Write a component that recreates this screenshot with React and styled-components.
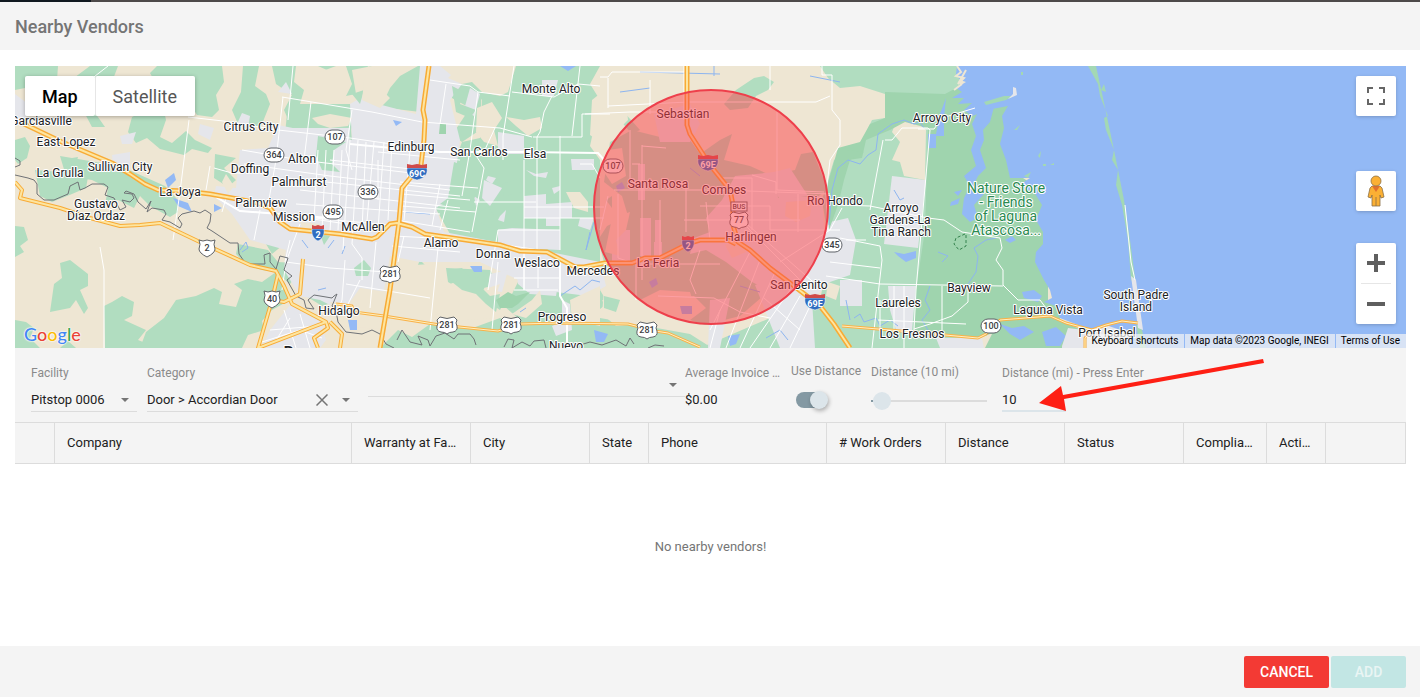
import React, { useState } from "react";
import styled, { createGlobalStyle } from "styled-components";

const GlobalStyle = createGlobalStyle`
  * {
    box-sizing: border-box;
  }
  body {
    margin: 0;
    background: #ffffff;
    color: #212121;
    font-family: Roboto, "Liberation Sans", sans-serif;
    font-size: 13px;
  }
  button, input, select {
    font: inherit;
    color: inherit;
  }
`;

const Page = styled.div`
  display: flex;
  flex-direction: column;
  min-height: 100vh;
`;

const BackdropStrip = styled.div`
  height: 2px;
  background: linear-gradient(to right, #101920 91px, #4d4a4a 91px);
`;

const Header = styled.header`
  display: flex;
  align-items: center;
  height: 48px;
  padding: 0 15px;
  background: #f4f4f4;
`;

const Title = styled.h1`
  margin: 0;
  color: #757575;
  font-size: 18px;
  font-weight: 500;
`;

const Content = styled.main`
  flex: 1;
  display: flex;
  flex-direction: column;
  padding: 16px 14px 0 15px;
`;

const Footer = styled.footer`
  display: flex;
  justify-content: flex-end;
  gap: 2px;
  padding: 10px 14px 9px;
  background: #f4f4f4;
`;

const ActionButton = styled.button`
  height: 32px;
  padding: 0 16px;
  min-width: 75px;
  border: 0;
  border-radius: 2px;
  background: ${({ $bg }) => $bg};
  color: ${({ $color }) => $color};
  font-size: 14px;
  font-weight: 500;
`;

/* ---------- map ---------- */

const MapFrame = styled.section`
  position: relative;
  height: 282px;
  overflow: hidden;
  background: #93b9f5;
`;

const MapSvg = styled.svg`
  display: block;
  width: 100%;
  height: 100%;

  text {
    font-family: Roboto, sans-serif;
    text-anchor: middle;
  }
`;

const MapTypes = styled.div`
  position: absolute;
  top: 10px;
  left: 10px;
  display: flex;
  border-radius: 2px;
  box-shadow: 0 1px 4px rgba(0, 0, 0, 0.3);
`;

const MapTypeButton = styled.button`
  height: 40px;
  padding: 0 ${({ $active }) => ($active ? 17 : 18)}px 0 17px;
  border: 0;
  border-left: ${({ $active }) => ($active ? "0" : "1px solid #e6e6e6")};
  border-radius: 2px;
  background: #ffffff;
  color: ${({ $active }) => ($active ? "#000000" : "#565656")};
  font-size: 18px;
  font-weight: ${({ $active }) => ($active ? 500 : 400)};
`;

const MapControls = styled.div`
  position: absolute;
  top: 10px;
  right: 10px;
  display: flex;
  flex-direction: column;
`;

const ControlGroup = styled.div`
  display: flex;
  flex-direction: column;
  align-items: center;
  width: 40px;
  margin-bottom: ${({ $space }) => $space || 0}px;
  border-radius: 2px;
  background: #ffffff;
  box-shadow: 0 1px 4px -1px rgba(0, 0, 0, 0.3);
`;

const ControlButton = styled.button`
  display: flex;
  align-items: center;
  justify-content: center;
  width: 40px;
  height: 40px;
  padding: 0;
  border: 0;
  background: transparent;
`;

const ControlDivider = styled.div`
  width: 30px;
  height: 1px;
  background: #e6e6e6;
`;

const Attribution = styled.div`
  position: absolute;
  right: 0;
  bottom: 0;
  display: flex;
  gap: 1px;
  color: #000000;
  font-size: 10px;
  line-height: 14px;
`;

const AttributionItem = styled.span`
  padding: 0 6px 0 5px;
  background: rgba(245, 245, 245, 0.7);
  white-space: nowrap;

  a,
  button {
    padding: 0;
    border: 0;
    background: none;
    color: inherit;
    text-decoration: none;
  }
`;

const greens = [
  "M15 66H58L57 80L35 86L15 90Z",
  "M63 86L90 66H118L112 82L98 92L93 110L105 127H92L84 112Z",
  "M157 66H222L224 82L216 95L219 110L212 117L197 115L189 102L176 98L170 88L155 82L150 73Z",
  "M243 66H259L255 86L266 94L270 104L262 124L249 130L238 124L232 110L241 92Z",
  "M132 117L162 102L166 120L160 137L172 143L186 131L195 140L212 148L208 153L192 149L184 155L160 149L147 138L136 143L128 132Z",
  "M272 66H296L294 82L304 90L300 104L316 109L332 104L342 112L355 104L366 103L382 105L390 88L400 76L418 66H300L318 66L345 78L336 98L356 94L352 70L372 66H424L420 112L372 106L350 112L352 140L334 138L312 120L290 124L284 110L292 95L276 84Z",
  "M288 104H352L354 120L348 140H300L285 134Z",
  "M15 140L25 137L30 146L27 158L18 164L15 160Z",
  "M35 170L62 172L72 158L78 157L74 170L88 177L86 188L72 194L52 202L40 196Z",
  "M60 156L120 166L165 186L177 199L178 212L170 217L150 206L140 196L134 208L118 200L105 205L108 188L92 180L66 176Z",
  "M215 154L236 158L224 168L236 180L228 187L214 178Z",
  "M15 226L24 227L28 240L20 246L24 252L15 257Z",
  "M60 263L70 260L88 274L88 286L80 290L88 308L84 314L76 300L70 308L50 312L54 284L62 278Z",
  "M15 320L26 322L34 328L30 338L40 348H15Z",
  "M60 348L68 341L76 348Z",
  "M104 306L112 302L122 296L134 302L132 316L124 320L146 330L138 340L158 348H105Z",
  "M140 348L146 332L164 318L176 300L196 296L214 288L222 292L219 304L236 307L242 290L234 284L248 279L262 282L276 272L284 283L290 300L272 310L262 321L264 330L248 335L242 348Z",
  "M238 244L268 250L278 262L294 263L297 275L290 284L276 272L262 270L246 265L236 254Z",
  "M306 296L332 292L334 302L322 306Z",
  "M271 232L285 236L283 245L272 254L266 244Z",
  "M450 80H482L480 130L462 142L452 135L470 108L452 98Z",
  "M482 66H612L602 92L592 100L590 135L600 142L600 262L560 262L540 253L512 245L450 234L440 216L434 206L446 200L454 164L462 142L480 138L482 100L468 82Z",
  "M446 268L490 270L498 284L484 288L488 302L500 310L505 300L478 290L462 278L458 288L448 282Z",
  "M520 278L580 284L588 294L600 292L604 306L588 318H548L530 340L500 336L520 320L504 306L512 294Z",
  "M380 348L398 330L412 337L430 324L470 329L500 318L524 328L546 320L600 318L640 325L690 334L712 348Z",
  "M420 260L430 270L424 282L414 274Z",
  "M580 262H606L600 290L606 300L592 300L583 294L588 280Z",
  "M610 142L632 130L664 138L690 140L700 154L720 140L732 134L724 160L750 166L770 175L795 170L801 154L813 152L828 190L812 200L790 206L776 210V232L796 238V270L770 290L740 316L705 325L690 320L706 308L694 296L640 300L620 282L604 262L598 240L607 226L628 216L622 196L604 182Z",
  "M820 66H960V360H805L798 310L820 300L830 250L822 200L834 160L860 145L872 120L885 118V94L860 86L840 88L828 78Z",
  "M724 104L736 90L754 78L764 76L774 82L768 90L756 96L748 108L730 110Z",
  "M618 118L622 110L640 130L632 134Z",
  "M806 300L828 310L840 326L860 348H700L770 318Z",
];

const parkGreens = [
  "M885 92L945 94L960 86L972 98L1000 96L1018 96L1020 176L1038 188L1048 196L1048 300L1060 306V330L990 334L980 338L914 330L916 290L925 230L928 128L905 122L890 130L866 140L862 158L834 162L838 148L860 142L870 124L885 118Z",
  "M834 162L846 150L864 152L850 160L844 180L838 205L829 230L826 190Z",
  "M1000 318L1016 324L1040 321L1056 318L1090 334L1088 348H985Z",
  "M496 300L508 292L516 296L530 292L518 304L512 308L500 308Z",
  "M440 124H446V134H439Z",
];

const beiges = [
  "M312 75L336 66H346L352 84L345 98L330 104L318 94L330 84Z",
  "M368 66L386 72L380 88L390 98L380 108L362 100L364 82Z",
  "M312 118L330 114L352 118L348 126L330 128L318 124Z",
  "M222 182L226 174L234 186L228 194Z",
  "M460 66H516L508 92L500 96L482 92L472 82L462 84L448 78Z",
  "M477 108L492 102L502 118L494 130L498 146L484 142L476 132Z",
  "M506 117L524 120L540 117L542 128L528 136L516 126Z",
  "M566 192L580 192L588 202L588 212L574 208Z",
  "M600 66H640L648 74L640 90L620 86L600 100L590 84Z",
  "M596 118L614 92L626 102L628 120L610 138L600 160L590 146Z",
  "M608 150L622 148L626 176L612 184L604 172Z",
  "M612 218L630 212L626 230L616 240L620 256L605 252Z",
  "M640 300L660 290L690 292L694 305L680 318L656 308Z",
  "M725 245L740 238L746 252L732 258Z",
  "M896 122L914 120L926 130L925 180L904 176L900 162L892 160L900 142L892 132Z",
  "M786 202L812 200L810 216L796 222L785 216Z",
  "M604 290L624 300L640 324L616 326L602 314Z",
  "M450 284L466 278L482 290L500 284L492 306L494 318L440 322L452 300Z",
  "M532 300L540 290L542 304L526 318L512 314Z",
  "M300 222L320 224L318 232L304 232Z",
  "M330 302L390 306L392 330L340 326Z",
  "M394 266L432 264L446 290L460 304L450 322L396 318L392 290Z",
  "M360 288L388 292L384 322L340 316Z",
  "M570 300L600 286V326L572 320Z",
  "M828 282L840 286L836 300L826 296Z",
];

const urban = [
  "M278 125L352 140L350 104L364 96L378 104L416 114L420 66H440L462 84L450 100L460 140L452 200L436 208L444 232L540 250L600 262L606 286L588 296L540 290L480 262L420 262L390 256L384 290L370 322L340 310L320 300L300 296L284 270L286 250L250 240L232 214L214 196L216 186L236 188L240 150L268 148Z",
  "M318 148H420V230H318Z",
  "M276 128H350L348 160L320 190L276 188Z",
  "M15 94L28 104L26 118L15 122Z",
  "M112 155L130 152L130 170L114 172Z",
  "M200 124L214 128L210 140L198 134Z",
  "M120 136L136 132L132 144L122 144Z",
  "M286 82L292 94L278 92Z",
  "M242 113L250 116L248 128L236 126Z",
  "M498 132L524 136V154H498Z",
  "M542 80L558 80L554 96H542Z",
  "M470 88L480 94L474 116L464 110Z",
  "M454 90L462 94L456 104Z",
  "M484 180L502 188L490 206L482 198Z",
  "M524 196L546 194V204L572 202V218H560V226H546V218H524Z",
  "M526 170L536 174L548 172L546 178L534 176Z M552 188L560 186V190L554 194Z",
  "M488 176L496 178L492 184L486 180Z M474 196L480 200L476 206Z M500 216L506 210L504 222L498 220Z",
  "M498 230L512 228L560 230V250L520 248L498 242Z",
  "M580 218H594L590 230L578 226Z",
  "M571 159H594V170H572Z",
  "M548 264L562 262L556 296L530 294L518 284L516 268Z",
  "M490 274L508 270L502 292L488 290Z",
  "M562 300L570 304L572 330L556 336L552 326L562 322Z",
  "M612 230H630V262H612Z",
  "M735 176L776 172L778 198L822 196L824 230L800 300L780 296L752 282L726 262L706 250L690 254L694 238L710 232L706 218L722 200Z",
  "M766 174L790 168L808 196L780 200Z",
  "M654 114L690 104L700 124L690 142H660Z",
  "M638 164H645V200H638Z M655 220H661V254H655Z M640 218H651V256H640Z M654 242H662V262H654Z",
  "M755 285L800 270L830 222L848 218L856 240L850 275L830 282L812 300L815 348H780Z",
  "M840 280H862V306H840Z",
  "M892 176L926 180L918 248L884 244Z",
  "M888 286L916 286L912 330H896L890 310Z",
  "M936 338H982L984 348H940Z",
  "M262 348L270 330L290 305L320 320L326 340L320 348Z",
  "M710 300L730 298L720 348H708Z",
];

const waters = [
  "M957 66H1420V360H1095L1100 340L1086 328L1060 318L1056 306L1044 302L1052 298L1050 290L1044 280L1039 270L1035 262L1036 252L1043 244L1043 232L1036 220L1042 205L1034 192L1018 186L1030 178L1010 178L1006 160L1000 144L1004 128L1002 116L1008 106L992 109L972 116L964 110L972 103L958 104L964 98L952 98L962 92L956 88L966 82L960 80L956 74Z",
  "M978 112L994 107L990 122L983 130L984 140L980 150L986 168L978 176L975 182L984 194L974 205L978 218L970 222L962 214L964 198L970 186L964 176L976 166L971 150L976 136L972 124Z",
  "M928 134H936L940 114L946 98L944 118L944 136L936 136V148H928Z",
  "M1042 332L1056 327L1066 336L1060 346H1046Z",
  "M1000 324L1012 328L1024 326L1034 332L1020 340L1010 334Z",
  "M1005 240L1012 236L1016 240L1010 243Z",
  "M1022 292L1034 290L1042 296L1038 302L1024 298Z",
  "M165 180L174 173L176 180L168 188Z",
  "M173 198L188 203L192 212L178 206Z",
  "M214 204L222 208L214 212Z",
  "M348 320H357V330H350Z",
  "M894 252L904 254L916 251L916 258L906 262L898 256Z",
  "M470 266L482 266L482 272L474 272Z",
  "M616 186L622 182L625 188L618 192Z",
  "M649 282L656 278L658 284L652 288Z M680 306H692V314H682Z",
  "M728 336L740 334L736 344L730 346Z",
  "M594 330L608 334L604 342H596Z",
  "M393 120L402 122L396 126Z M560 66H576L568 71Z",
  "M951 202L960 198L958 204L950 206Z M954 192L962 190L958 196Z",
];

const islands = [
  "M1088 66H1096L1103 98L1114 150L1124 200L1130 240L1136 285L1131 280L1128 240L1122 205L1116 185L1118 170L1112 160L1114 150L1106 130L1104 118L1108 116L1100 96L1098 84Z",
  "M984 102L1004 96L1012 96L1006 100L986 105Z",
  "M1038 156L1041 151L1040 158Z M1024 176L1031 172L1028 178Z M1014 130L1020 125L1017 130Z M1021 72H1023V75H1021Z",
  "M1136 324L1142 330L1146 348H1140Z",
  "M1104 84L1106 92L1101 90Z M1043 164H1046V166H1043Z M1050 165L1054 163V165Z",
];

const streets = [
  "M108 66L90 80",
  "M100 247L104 270V348 M293 66L288 120",
  "M188 117L223 121L278 130L350 138L412 147",
  "M282 97L372 112L422 122L500 128L532 137",
  "M283 97L276 160L268 205L250 205 M311 102L304 160 M290 240L285 262 M352 110L346 150L352 170",
  "M189 120L180 192L173 240 M210 166L206 190 M214 168L232 173L244 173",
  "M242 150L300 160L420 174 M244 164L330 176L450 190 M288 178L460 196 M300 190L460 208 M296 204L440 214 M292 216L400 226",
  "M318 150L314 220 M326 150L322 230 M334 150L330 232 M342 150L338 230 M350 140L343 250 M358 140L352 244L362 258V280 M366 142L362 230 M374 142L366 232 M384 142L378 230 M392 142L388 220 M410 150L404 220",
  "M378 152L460 160 M330 160L420 170 M400 182L478 188 M402 194L470 200 M402 206L476 212 M396 220L470 232",
  "M378 160V200 M440 184L432 226 M448 200L440 230 M394 236L470 240L540 250 M392 246L460 252 M404 236L398 262",
  "M300 224L286 262L282 290 M286 262L330 268L386 272 M345 260L342 300L338 310 M376 242L370 308 M360 280L345 310 M346 284L430 298 M438 248L430 330",
  "M216 197L240 211L280 214L360 226 M226 198L222 212 M260 210L254 240",
  "M430 80L470 86L478 92L510 96 M512 92L554 97L578 84L600 86 M446 84L440 124 M478 92L470 150L462 196 M514 66L503 136V160",
  "M552 96L544 112L540 132L537 137V250 M580 66L572 136 M533 137H582V114H610 M475 154L484 168",
  "M560 136V250 M484 168L480 190L472 232 M495 128L482 156",
  "M474 202H536 M524 160V290 M524 207H604 M524 218H604 M498 230H560 M580 164H592L600 178",
  "M514 278H560 M514 290H558 M524 254V290 M538 256V288 M498 230L488 290 M498 262L492 330",
  "M600 77H608L612 72H684 M608 78V108 M608 106L688 102H816L830 96 M684 66V120 M650 80V114 M585 114L630 112L680 112",
  "M822 66V75H832L832 110L840 120V145L830 160L826 194L828 230 M777 112V190L824 192 M770 66V90",
  "M630 130V188 M642 146L666 148 M640 164H632 M642 145V280 M614 190H720L830 194 M608 196L600 230 M686 188V232 M660 200V260 M618 194L618 258L636 264V300",
  "M700 206H770V230H840 M684 220H800 M706 202L710 240 M720 178H752V230 M752 175L776 182V194 M740 218L820 288 M744 224L800 280 M798 194V232 M750 252L710 330 M760 260L726 348 M776 270L740 348 M720 264L640 264 M700 250L690 280L696 294",
  "M658 296L714 298L740 312L770 318 M720 310L710 348 M790 290L750 348 M800 296L770 348 M810 306L790 348 M780 262L830 230L842 208 M764 298L800 330",
  "M840 205L870 206L928 218L944 220L962 232L1000 238L1002 248L996 260L1003 270V285L1018 300H1040L1046 308",
  "M826 276L880 284L1003 286 M883 140L870 210 M885 140H892L902 128L928 128L930 130L916 290L914 330 M918 129L934 129L942 118L975 108",
  "M840 238L880 246L882 260L872 348 M830 262L880 268 M878 320L966 324 M880 300V330 M894 286V330 M904 286V348 M942 286V330 M968 286V302L952 316L930 324L914 329 M846 240H866",
  "M1125 205L1131 262L1135 280",
  "M262 342L300 330L322 338 M284 310L296 348 M300 314L310 348 M270 330L318 326 M275 342L290 318",
];

const creeks = [
  "M829 225L832 190L838 168L848 160L860 164L868 155L876 150L878 134L892 124L904 120L914 124L920 122L924 128",
  "M240 250L246 242L248 248L242 252 M590 232L586 250L594 222 M560 296L575 286L580 290L592 280L600 282 M520 312L526 308",
  "M854 318L860 314L864 322L876 318L880 326L890 320L898 326",
  "M930 286L925 300L930 310L922 320L928 330 M968 284L976 272L978 256L974 248L986 240L996 238",
  "M894 190L900 200L904 198 M900 218L922 224 M938 252L948 256L942 262",
  "M640 72L720 74 M810 76L840 82 M620 92L650 88 M714 66V76 M406 212L430 214",
  "M846 300L850 320 M766 338L780 330L788 340 M740 286L760 292 M690 168L700 176",
  "M328 248L334 240 M302 240L308 248 M345 246L342 254 M318 290L326 288",
];

const river =
  "M15 158L20 161V165L15 167 M15 175L28 178L34 180L37 184V194L44 200L54 200L68 194L70 186L78 182L80 190L85 188L92 184H104L108 187L105 195L114 198L118 206L120 210L126 207L122 200L130 202L134 198L132 194L124 193L126 191L134 194L138 202L146 209L151 201L147 212L152 208L164 210L166 214L162 220L170 222L180 228L182 224L178 218L182 214L194 211L200 213L205 210L211 214L210 222L207 228L212 231L230 243H238L239 254L246 264L265 264L264 255L270 253L270 262L276 269L280 256L288 258L284 270L292 276L287 280L296 296L304 300L306 308L314 309L308 300L314 295L332 298L334 296L337 294L332 306L336 311L338 322L346 332L362 334L372 330L380 334L386 344L394 348 M397 340L402 330L410 342L422 345L418 336L428 340L430 346L436 336L445 333L454 339L458 334L470 334L474 339L476 345 M504 347L508 339L514 340L512 348L522 342L530 346L534 341L544 340L546 348 M580 345L590 342L602 345L616 340L626 346L630 338L634 344 M648 348L655 345L664 346";

const highways = [
  "M20 122L62 142L112 163L130 174L145 184L158 190L185 191L210 194L232 198L258 203L270 208L280 222L290 229L340 234L372 239L377 237L390 224L397 223L412 227L425 234L500 245L520 251L547 252L575 267L584 267L605 263H632L645 258H660L690 243L700 240H728L736 244",
  "M429 66L423 110L425 120L424 140L421 165L402 188L399 222L390 290L380 348",
  "M687 66V125L690 134L710 165L730 190L733 205V225L738 242L750 250L770 268L794 286L820 306L834 324L850 348",
  "M15 182L22 190L20 198L60 208L90 218L120 226L140 225L160 223L204 244L250 265L276 271L284 286L292 304L326 322L328 328L314 338L318 348",
  "M278 274L272 300L258 348L326 322 M303 259L300 294L284 302L272 300 M330 322L342 334L340 348",
];

const minorHighways = [
  "M336 304L352 306L354 312L384 316L440 325L498 331L520 324L560 323L628 324L655 331L668 333L700 347",
  "M842 326L890 330L978 338L986 334L1000 320L1050 316L1066 323L1092 330L1106 325L1122 321L1138 323",
  "M1085 348V338L1092 330",
];

const places = [
  ["Garciasville", 41, 121],
  ["East Lopez", 66, 142],
  ["La Grulla", 60, 173],
  ["Sullivan City", 120, 167],
  ["La Joya", 180, 192],
  ["Gustavo", 96, 204],
  ["Díaz Ordaz", 96, 216],
  ["Citrus City", 251, 127],
  ["Alton", 302, 159],
  ["Doffing", 250, 169],
  ["Palmhurst", 299, 182],
  ["Palmview", 261, 203],
  ["Mission", 294, 217],
  ["McAllen", 363, 227],
  ["Edinburg", 411, 147],
  ["San Carlos", 479, 152],
  ["Elsa", 535, 154],
  ["Monte Alto", 551, 89],
  ["Alamo", 441, 243],
  ["Donna", 493, 254],
  ["Weslaco", 537, 263],
  ["Mercedes", 593, 271],
  ["Progreso", 562, 317],
  ["Hidalgo", 339, 311],
  ["Nuevo", 566, 346],
  ["Sebastian", 683, 114],
  ["Santa Rosa", 658, 184],
  ["Combes", 724, 190],
  ["Rio Hondo", 835, 201],
  ["Harlingen", 751, 237],
  ["La Feria", 658, 263],
  ["San Benito", 799, 285],
  ["Arroyo City", 942, 118],
  ["Arroyo", 901, 208],
  ["Gardens-La", 900, 220],
  ["Tina Ranch", 901, 232],
  ["Bayview", 969, 288],
  ["Laureles", 898, 303],
  ["Los Fresnos", 912, 334],
  ["Laguna Vista", 1048, 310],
  ["Port Isabel", 1107, 333],
  ["South Padre", 1136, 295],
  ["Island", 1136, 307],
];

const parkLabel = [
  ["Nature Store", 1006, 188],
  ["- Friends", 1006, 202],
  ["of Laguna", 1006, 216],
  ["Atascosa...", 1006, 230],
];

const shields = [
  ["state", "107", 335, 137],
  ["state", "364", 274, 155],
  ["state", "336", 368, 192],
  ["state", "495", 333, 212],
  ["state", "107", 613, 166],
  ["state", "345", 832, 245],
  ["state", "100", 991, 326],
  ["us", "281", 390, 274],
  ["us", "281", 447, 325],
  ["us", "281", 511, 325],
  ["us", "281", 647, 330],
  ["us", "77", 739, 220],
  ["mx", "2", 207, 248],
  ["mx", "40", 272, 299],
  ["interstate", "69C", 417, 172],
  ["interstate", "2", 318, 233],
  ["interstate", "69E", 708, 163],
  ["interstate", "2", 688, 244],
  ["interstate", "69E", 815, 302],
];

const usShield = (w) =>
  `M${3 - w} -8Q0 -5 ${w - 3} -8L${w} -5Q${w - 2} -2 ${w} 1Q${w + 1} 6 ${w - 4} 7Q2 7 0 9Q-2 7 ${4 - w} 7Q${-w - 1} 6 ${-w} 1Q${2 - w} -2 ${-w} -5Z`;

const mxShield = "M-8 -8Q-4 -6 0 -8Q4 -6 8 -8Q6 -4 8 1Q8 5 0 9Q-8 5 -8 1Q-6 -4 -8 -8Z";

const RoadShield = ({ kind, label, x, y }) => {
  const wide = label.length > 2;
  if (kind === "interstate") {
    const w = wide ? 10 : 6;
    return (
      <g transform={`translate(${x} ${y})`}>
        <path
          d={`M${-w} -4H${w}C${w + 1} 2 ${w - 2} 6 0 8C${2 - w} 6 ${-w - 1} 2 ${-w} -4Z`}
          fill="#2f6cc0"
          stroke="#ffffff"
          strokeWidth="0.5"
        />
        <path d={`M${-w} -4V-8L${-w / 2} -7L0 -8L${w / 2} -7L${w} -8V-4Z`} fill="#cf4a4a" />
        <text y="5" fontSize="9" fontWeight="700" fill="#ffffff">
          {label}
        </text>
      </g>
    );
  }
  return (
    <g transform={`translate(${x} ${y})`}>
      {kind === "state" ? (
        <rect x="-10" y="-7" width="20" height="14" rx="7" fill="#ffffff" stroke="#5f6368" />
      ) : (
        <path d={kind === "us" ? usShield(wide ? 10 : 9) : mxShield} fill="#ffffff" stroke="#5f6368" />
      )}
      <text y="3" fontSize="9" fontWeight="500" fill="#3c4043">
        {label}
      </text>
    </g>
  );
};

const VendorMap = () => (
  <MapSvg viewBox="15 66 1391 282" preserveAspectRatio="xMidYMid slice" role="img" aria-label="Map">
    <rect x="-400" y="-200" width="2400" height="900" fill="#eee6d3" />
    {greens.map((d, i) => (
      <path key={i} d={d} fill="#b1ddc0" />
    ))}
    {urban.map((d, i) => (
      <path key={i} d={d} fill="#e5e6eb" />
    ))}
    <g fill="#b1ddc0">
      <path d="M454 162L476 170L468 180L476 196L466 206L476 212L466 224L448 206L440 204L448 198Z" />
      <path d="M478 214L488 206L494 216L490 228L480 222Z M502 184L520 178L524 192L504 196Z M352 94L364 90L360 104Z" />
      <path d="M318 136L346 142L334 150L332 164L340 172L322 170L316 156Z M438 206L450 204L462 214L444 214Z M606 200L612 196V208Z" />
      <path d="M354 268L364 260L371 268L368 276H356Z M320 234L330 236L324 245Z M452 86L464 92L460 104L476 110L470 118L456 112Z" />
    </g>
    {beiges.map((d, i) => (
      <path key={i} d={d} fill="#eee6d3" />
    ))}
    <path
      d="M448 270L462 268L470 278L486 276L482 288L490 296L500 294L496 312L486 304L476 294L462 290L452 282Z M604 296L620 300L616 312L604 308Z"
      fill="#b1ddc0"
    />
    {parkGreens.map((d, i) => (
      <path key={i} d={d} fill="#9fd4ae" />
    ))}
    {waters.map((d, i) => (
      <path key={i} d={d} fill="#93b9f5" />
    ))}
    {islands.map((d, i) => (
      <path key={i} d={d} fill="#a3d8b4" />
    ))}
    <path d="M1131 276L1136 280L1143 330L1138 328Z M1013 87L1016 88L1017 95L1008 99L1013 94Z" fill="#e5e6eb" />
    <path d="M1062 346L1068 328L1092 331L1106 325L1126 332L1130 348H1062Z" fill="#e5e6eb" />
    <path
      d="M957 66L961 72L956 76L964 78L958 84L966 70 M954 90L962 84"
      fill="none"
      stroke="#eee6d3"
      strokeWidth="2"
    />
    <g fill="none" stroke="#8db5f0" strokeWidth="1">
      {creeks.map((d, i) => (
        <path key={i} d={d} />
      ))}
    </g>
    <g fill="none" stroke="#ffffff" strokeWidth="1" strokeLinejoin="round">
      {streets.map((d, i) => (
        <path key={i} d={d} />
      ))}
    </g>
    <path
      d="M350 144L412 150L440 152H525L598 153L606 162 M216 197L240 211L330 218 M560 262V296L567 308V348"
      fill="none"
      stroke="#ffffff"
      strokeWidth="2"
    />
    <path d={river} fill="none" stroke="#6f7276" strokeWidth="1" strokeLinejoin="round" />
    <g fill="none" strokeLinejoin="round">
      {minorHighways.map((d, i) => (
        <path key={i} d={d} stroke="#f9b248" strokeWidth="3" />
      ))}
      {minorHighways.map((d, i) => (
        <path key={i} d={d} stroke="#fff0c0" strokeWidth="1" />
      ))}
      {highways.map((d, i) => (
        <path key={i} d={d} stroke="#f8ab35" strokeWidth={i < 3 ? 5 : 4} />
      ))}
      {highways.map((d, i) => (
        <path key={i} d={d} stroke="#fde5a0" strokeWidth="2" />
      ))}
    </g>
    <path
      d="M965 234L956 238L954 244L959 250L966 246V234"
      fill="none"
      stroke="#35834e"
      strokeWidth="1"
      strokeDasharray="3 2"
    />
    {shields.map(([kind, label, x, y]) => (
      <RoadShield key={`${label}-${x}`} kind={kind} label={label} x={x} y={y} />
    ))}
    <rect x="731" y="202" width="16" height="9" fill="#ffffff" stroke="#5f6368" />
    <text x="739" y="209" fontSize="7" fontWeight="500" fill="#3c4043">
      BUS
    </text>
    <g fontSize="12" fill="#202124" stroke="#ffffff" strokeWidth="2" strokeLinejoin="round" paintOrder="stroke">
      {places.map(([name, x, y]) => (
        <text key={name} x={x} y={y + 4}>
          {name}
        </text>
      ))}
      <text x="314" y="358" fontSize="16" fontWeight="500">
        Reynosa
      </text>
    </g>
    <g fontSize="14" fill="#2a8a50" stroke="#ffffff" strokeWidth="2" strokeLinejoin="round" paintOrder="stroke">
      {parkLabel.map(([line, x, y]) => (
        <text key={line} x={x} y={y + 5}>
          {line}
        </text>
      ))}
    </g>
    <circle cx="711" cy="207" r="117" fill="#fb3f48" fillOpacity="0.5" stroke="#ee3f4b" strokeWidth="2" />
  </MapSvg>
);

const Logo = styled.a`
  position: absolute;
  left: 9px;
  bottom: 2px;
  font-family: Lato, sans-serif;
  font-size: 18px;
  font-weight: 500;
  line-height: 24px;
  text-decoration: none;
  text-shadow: 0 0 2px #ffffff, 0 0 2px #ffffff, 0 0 1px #ffffff;
`;

const LogoLetter = styled.span`
  color: ${({ $color }) => $color};
`;

const logoLetters = [
  ["G", "#4285f4"],
  ["o", "#ea4335"],
  ["o", "#fbbc05"],
  ["g", "#4285f4"],
  ["l", "#34a853"],
  ["e", "#ea4335"],
];

const FullscreenIcon = () => (
  <svg width="18" height="18" viewBox="0 0 18 18" fill="#666666">
    <path d="M0 0V6H2V2H6V0Z M12 0V2H16V6H18V0Z M16 12V16H12V18H18V12Z M2 12H0V18H6V16H2Z" />
  </svg>
);

const PegmanIcon = () => (
  <svg width="18" height="32" viewBox="0 0 18 32" stroke="#8a7046" strokeWidth="0.8" strokeLinejoin="round">
    <path d="M5 11L3 13L1 22L4 23L5 20V31H13V20L14 23L17 22L15 13L13 11Z" fill="#fbb034" />
    <path d="M5 11H13L9 17Z" fill="#e0702e" stroke="none" />
    <circle cx="9" cy="6" r="5" fill="#fbb034" />
    <path d="M9 22V31" />
  </svg>
);

const PlusIcon = () => (
  <svg width="18" height="18" viewBox="0 0 18 18" fill="#5f5f5f">
    <path d="M7 0H11V7H18V11H11V18H7V11H0V7H7Z" />
  </svg>
);

const MinusIcon = () => (
  <svg width="18" height="18" viewBox="0 0 18 18" fill="#5f5f5f">
    <path d="M0 7H18V11H0Z" />
  </svg>
);

/* ---------- filters ---------- */

const Filters = styled.form`
  display: grid;
  grid-template-columns: 116px 221px minmax(60px, 317fr) 106px 80px 131px minmax(160px, 404fr);
  padding-left: 16px;
  background: #f4f4f4;
`;

const Field = styled.div`
  position: relative;
  display: flex;
  flex-direction: column;
  padding: ${({ $top }) => $top || 17}px ${({ $gap }) => $gap || 0}px 10px 0;
`;

const Label = styled.label`
  overflow: hidden;
  color: #8a8a8a;
  font-size: 12px;
  line-height: 16px;
  text-overflow: ellipsis;
  white-space: nowrap;
`;

const SelectBox = styled.div`
  position: relative;
  height: 25px;
  margin-top: 6px;
  border-bottom: 1px solid #dcdcdc;
`;

const Select = styled.select`
  width: 100%;
  height: 24px;
  padding: 0;
  border: 0;
  background: transparent;
  appearance: none;
  outline: none;
`;

const Caret = styled.span`
  position: absolute;
  top: 11px;
  right: 8px;
  border: 4px solid transparent;
  border-top-color: #757575;
  border-bottom: 0;
  pointer-events: none;
`;

const ClearButton = styled.button`
  position: absolute;
  top: 7px;
  right: 30px;
  display: flex;
  padding: 0;
  border: 0;
  background: none;
`;

const Amount = styled.output`
  height: 25px;
  margin-top: 6px;
  line-height: 26px;
`;

const Toggle = styled.input`
  position: relative;
  width: 30px;
  height: 16px;
  margin: 13px 0 0 5px;
  border-radius: 8px;
  background: #8499a3;
  appearance: none;

  &::after {
    content: "";
    position: absolute;
    top: -1px;
    right: -2px;
    width: 18px;
    height: 18px;
    border-radius: 50%;
    background: #dce5ea;
    box-shadow: 1px 2px 4px rgba(0, 0, 0, 0.3);
  }
`;

const Slider = styled.input`
  width: 116px;
  height: 18px;
  margin: 12px 0 0;
  background: linear-gradient(to right, #8499a3 2px, #dcdcdc 2px) center / 100% 2px no-repeat;
  appearance: none;

  &::-webkit-slider-thumb {
    width: 18px;
    height: 18px;
    border-radius: 50%;
    background: #dce5ea;
    appearance: none;
  }
`;

const DistanceInput = styled.input`
  width: 64px;
  height: 25px;
  margin-top: 6px;
  padding: 2px 0 0;
  border: 0;
  border-bottom: 2px solid #dce5ea;
  background: transparent;
  outline: none;
`;

const Pointer = styled.svg`
  position: absolute;
  top: 10px;
  left: 37px;
  pointer-events: none;
`;

/* ---------- table ---------- */

const Table = styled.table`
  width: 100%;
  table-layout: fixed;
  border-collapse: separate;
  border-spacing: 0;
`;

const HeadCell = styled.th`
  width: ${({ $width }) => ($width ? `${$width}px` : "auto")};
  height: 42px;
  padding: 0 12px 2px;
  overflow: hidden;
  border: solid #dcdcdc;
  border-width: 1px 1px 1px 0;
  background: #f4f4f4;
  font-weight: 400;
  text-align: left;
  text-overflow: ellipsis;
  white-space: nowrap;
`;

const EmptyCell = styled.td`
  height: 166px;
  padding: 0 0 2px;
  color: #757575;
  text-align: center;
`;

const columns = [
  { id: "select", title: "", width: 40 },
  { id: "company", title: "Company" },
  { id: "warranty", title: "Warranty at Facility", width: 119 },
  { id: "city", title: "City", width: 119 },
  { id: "state", title: "State", width: 59 },
  { id: "phone", title: "Phone", width: 178 },
  { id: "orders", title: "# Work Orders", width: 119 },
  { id: "distance", title: "Distance", width: 119 },
  { id: "status", title: "Status", width: 119 },
  { id: "compliance", title: "Compliance", width: 83 },
  { id: "actions", title: "Actions", width: 59 },
  { id: "more", title: "", width: 80 },
];

const App = () => {
  const [useDistance, setUseDistance] = useState(true);
  const [distance, setDistance] = useState("10");

  return (
    <>
      <GlobalStyle />
      <Page>
        <BackdropStrip />
        <Header>
          <Title>Nearby Vendors</Title>
        </Header>
        <Content>
          <MapFrame>
            <VendorMap />
            <MapTypes>
              <MapTypeButton $active>Map</MapTypeButton>
              <MapTypeButton>Satellite</MapTypeButton>
            </MapTypes>
            <MapControls>
              <ControlGroup $space={55}>
                <ControlButton aria-label="Toggle fullscreen view">
                  <FullscreenIcon />
                </ControlButton>
              </ControlGroup>
              <ControlGroup $space={32}>
                <ControlButton aria-label="Street View">
                  <PegmanIcon />
                </ControlButton>
              </ControlGroup>
              <ControlGroup>
                <ControlButton aria-label="Zoom in">
                  <PlusIcon />
                </ControlButton>
                <ControlDivider />
                <ControlButton aria-label="Zoom out">
                  <MinusIcon />
                </ControlButton>
              </ControlGroup>
            </MapControls>
            <Logo href="#google">
              {logoLetters.map(([letter, color], i) => (
                <LogoLetter key={i} $color={color}>
                  {letter}
                </LogoLetter>
              ))}
            </Logo>
            <Attribution>
              <AttributionItem>
                <button>Keyboard shortcuts</button>
              </AttributionItem>
              <AttributionItem>Map data ©2023 Google, INEGI</AttributionItem>
              <AttributionItem>
                <a href="#terms">Terms of Use</a>
              </AttributionItem>
            </Attribution>
          </MapFrame>

          <Filters onSubmit={(e) => e.preventDefault()}>
            <Field $gap={10}>
              <Label htmlFor="facility">Facility</Label>
              <SelectBox>
                <Select id="facility">
                  <option>Pitstop 0006</option>
                </Select>
                <Caret />
              </SelectBox>
            </Field>
            <Field $gap={10}>
              <Label htmlFor="category">Category</Label>
              <SelectBox>
                <Select id="category">
                  <option>Door &gt; Accordian Door</option>
                </Select>
                <ClearButton type="button" aria-label="Clear category">
                  <svg width="12" height="12" viewBox="0 0 12 12" stroke="#757575" strokeWidth="1.5">
                    <path d="M0.5 0.5L11.5 11.5M11.5 0.5L0.5 11.5" />
                  </svg>
                </ClearButton>
                <Caret />
              </SelectBox>
            </Field>
            <Field $top={18}>
              <SelectBox>
                <Select aria-label="Subcategory" />
                <Caret />
              </SelectBox>
            </Field>
            <Field $gap={10}>
              <Label as="span">Average Invoice Amount</Label>
              <Amount>$0.00</Amount>
            </Field>
            <Field $top={15}>
              <Label htmlFor="use-distance">Use Distance</Label>
              <Toggle
                id="use-distance"
                type="checkbox"
                checked={useDistance}
                onChange={(e) => setUseDistance(e.target.checked)}
              />
            </Field>
            <Field $top={16}>
              <Label htmlFor="distance-range">Distance ({distance} mi)</Label>
              <Slider
                id="distance-range"
                type="range"
                min="0"
                max="500"
                value={distance}
                onChange={(e) => setDistance(e.target.value)}
              />
            </Field>
            <Field>
              <Label htmlFor="distance">Distance (mi) - Press Enter</Label>
              <DistanceInput
                id="distance"
                type="text"
                value={distance}
                onChange={(e) => setDistance(e.target.value)}
              />
              <Pointer width="228" height="56" viewBox="0 0 228 56" fill="#fe1f14">
                <path d="M0 45L22 28L24 37L224 1L225 5L25 41L27 53Z" />
              </Pointer>
            </Field>
          </Filters>

          <Table>
            <thead>
              <tr>
                {columns.map(({ id, title, width }) => (
                  <HeadCell key={id} $width={width}>
                    {title}
                  </HeadCell>
                ))}
              </tr>
            </thead>
            <tbody>
              <tr>
                <EmptyCell colSpan={columns.length}>No nearby vendors!</EmptyCell>
              </tr>
            </tbody>
          </Table>
        </Content>
        <Footer>
          <ActionButton $bg="#f33a34" $color="#ffffff">
            CANCEL
          </ActionButton>
          <ActionButton $bg="#c2e6e4" $color="#eaf5f4" disabled>
            ADD
          </ActionButton>
        </Footer>
      </Page>
    </>
  );
};

export default App;
